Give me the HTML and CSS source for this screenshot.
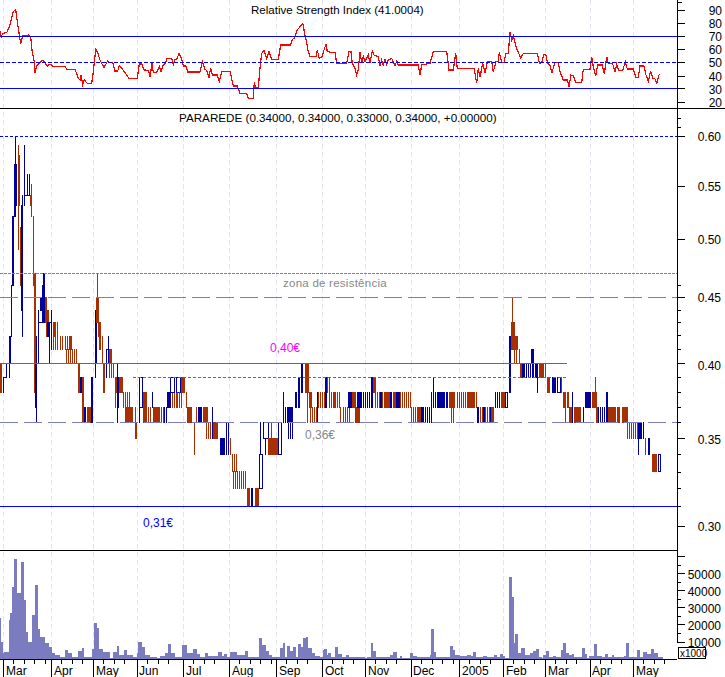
FILE: index.html
```html
<!DOCTYPE html>
<html lang="en">
<head>
    <meta charset="UTF-8">
    <title>PARAREDE</title>
    <link rel="stylesheet" href="styles.css">
</head>
<body>
    <svg id="chart" class="chart" width="725" height="677" viewBox="0 0 725 677">
        <g id="grid"></g>
        <g id="volume"></g>
        <g id="bars"></g>
        <g id="lines"></g>
        <g id="ticks"></g>

        <text class="label rsi-title" x="251" y="14">Relative Strength Index (41.0004)</text>
        <text class="label" x="179" y="122">PARAREDE (0.34000, 0.34000, 0.33000, 0.34000, +0.00000)</text>
        <text class="note note-grey wide" x="283" y="287">zona de resistência</text>
        <text class="note note-pink" x="270" y="352">0,40€</text>
        <text class="note note-grey" x="305" y="439">0,36€</text>
        <text class="note note-blue" x="143" y="527">0,31€</text>

        <g class="axis-right">
            <text x="722" y="15">90</text>
            <text x="722" y="28">80</text>
            <text x="722" y="41">70</text>
            <text x="722" y="54">60</text>
            <text x="722" y="67">50</text>
            <text x="722" y="81">40</text>
            <text x="722" y="94">30</text>
            <text x="722" y="107">20</text>
            <text x="721" y="141">0.60</text>
            <text x="721" y="191">0.55</text>
            <text x="721" y="244">0.50</text>
            <text x="721" y="302">0.45</text>
            <text x="721" y="370">0.40</text>
            <text x="721" y="444">0.35</text>
            <text x="721" y="531">0.30</text>
            <text x="721" y="579">50000</text>
            <text x="721" y="596">40000</text>
            <text x="721" y="613">30000</text>
            <text x="721" y="630">20000</text>
            <text x="721" y="647">10000</text>
        </g>

        <g class="axis-bottom">
            <text x="6" y="675">Mar</text>
            <text x="54" y="675">Apr</text>
            <text x="96" y="675">May</text>
            <text x="139" y="675">Jun</text>
            <text x="186" y="675">Jul</text>
            <text x="232" y="675">Aug</text>
            <text x="279" y="675">Sep</text>
            <text x="325" y="675">Oct</text>
            <text x="368" y="675">Nov</text>
            <text x="413" y="675">Dec</text>
            <text x="462" y="675">2005</text>
            <text x="506" y="675">Feb</text>
            <text x="548" y="675">Mar</text>
            <text x="592" y="675">Apr</text>
            <text x="636" y="675">May</text>
        </g>

        <rect class="unit-box" x="678.5" y="647.5" width="27" height="11"></rect>
        <text class="unit" x="680" y="657">x1000</text>
    </svg>

    <script src="chart.js"></script>
</body>
</html>
```

FILE: styles.css
```css
body {
    margin: 0;
    background: #fff;
}
.chart {
    display: block;
    shape-rendering: crispEdges;
    font-family: "Liberation Sans", Arial, sans-serif;
    font-size: 12px;
}
.label {
    font-size: 11.67px;
    fill: #000;
}
.rsi-title {
    font-size: 11.55px;
}
.note {
    font-size: 12px;
}
.note-grey {
    fill: #888;
}
.note-pink {
    fill: #f0f;
}
.note-blue {
    fill: #00f;
}
.wide {
    font-size: 11.5px;
    letter-spacing: 0.25px;
}
.axis-right text {
    text-anchor: end;
    fill: #000;
}
.axis-bottom text {
    fill: #000;
}
.unit-box {
    fill: #fff;
    stroke: #000;
}
.unit {
    font-size: 10px;
    fill: #000;
}
.black {
    stroke: #000;
}
.grid-line {
    stroke: #e3e3f4;
    stroke-dasharray: 5 3;
}
.level {
    stroke: #00f;
}
.dash-blue {
    stroke: #00f;
    stroke-dasharray: 4 2;
}
.dash-top {
    stroke: #00f;
    stroke-dasharray: 3 2;
}
.pink {
    stroke: #f0f;
}
.dash-pink {
    stroke: #f0f;
    stroke-dasharray: 3 2;
}
.dash-short {
    stroke: #7b7bc0;
    stroke-dasharray: 3 1;
}
.dash-long {
    stroke: #7b7bc0;
    stroke-dasharray: 18 6;
}
.rsi {
    fill: none;
    stroke: #f00;
    stroke-width: 1.2;
}
.vol {
    fill: #7b7bc0;
}
.up {
    fill: #00009c;
}
.down {
    fill: #a83000;
}
.hollow {
    fill: none;
    stroke: #00009c;
}
```

FILE: chart.js
```js
const NS = 'http://www.w3.org/2000/svg';

function add(group, tag, attrs) {
    const el = document.createElementNS(NS, tag);
    for (const k in attrs) el.setAttribute(k, attrs[k]);
    document.getElementById(group).appendChild(el);
}

function hline(group, cls, y, x1, x2) {
    add(group, 'line', { class: cls, x1: x1, x2: x2, y1: y + 0.5, y2: y + 0.5 });
}

function vline(group, cls, x, y1, y2) {
    add(group, 'line', { class: cls, x1: x + 0.5, x2: x + 0.5, y1: y1, y2: y2 });
}

// month starts
const months = [3, 51, 93, 137, 183, 229, 276, 322, 365, 411, 459, 503, 545, 590, 633, 677];

months.slice(0, -1).forEach(x => vline('grid', 'grid-line', x, 0, 659));

// price scale is logarithmic, prices are in cents
const py = c => Math.round(135.6 + 561 * Math.log(60 / c));

// x0, x1, high, low, kind: r/b solid, R/B striped, H hollow
const bars = [
    [0,1,40,38,'r'],[3,3,39,38,'b'],[3,6,39,39,'b'],[6,6,40,39,'b'],[9,9,42,39,'b'],[10,10,42,40,'b'],[11,11,46,42,'b'],
    [12,13,52,46,'b'],[14,14,53,52,'b'],[14,16,57,53,'H'],[15,15,60,52,'b'],[18,18,59,49,'r'],[18,19,58,53,'r'],
    [20,21,51,46,'r'],[21,22,53,44,'b'],[22,22,54,42,'b'],[24,24,59,53,'b'],[24,29,54,54,'b'],[27,27,56,54,'b'],[29,29,56,54,'b'],
    [30,31,54,53,'r'],[31,31,55,52,'r'],[33,33,52,47,'r'],[33,35,47,46,'r'],[34,35,46,38,'r'],[35,35,38,37,'r'],[36,36,42,36,'b'],[35,36,40,37,'b'],
    [38,38,44,40,'b'],[38,41,43,43,'b'],[40,41,45,44,'b'],[42,42,46,43,'b'],[43,44,47,43,'b'],[45,46,45,43,'r'],[46,46,43,42,'r'],
    [47,48,44,43,'r'],[47,49,43,42,'b'],[49,49,43,40,'b'],[49,51,43,43,'b'],[51,51,44,41,'b'],
    [53,58,43,41,'R'],[53,54,43,42,'r'],[60,63,42,41,'R'],[65,69,42,41,'R'],[70,71,42,41,'r'],[66,77,41,40,'R'],
    [78,79,40,38,'r'],[80,81,39,38,'b'],[82,83,39,36,'r'],[84,85,37,36,'b'],[87,89,37,36,'r'],[90,90,37,36,'r'],[91,92,39,36,'b'],
    [95,96,44,40,'b'],[95,95,40,39,'b'],[96,98,45,43,'r'],[97,97,47,45,'r'],[98,98,43,42,'r'],[99,100,43,41,'r'],[102,102,42,40,'r'],
    [103,104,40,38,'r'],[106,106,41,39,'b'],[106,108,41,41,'b'],[108,108,42,40,'b'],[109,111,41,40,'r'],[109,114,40,39,'R'],
    [115,116,39,38,'r'],[115,115,38,37,'r'],[117,117,40,36,'b'],[118,118,39,37,'b'],[119,122,39,38,'r'],
    [123,129,38,37,'R'],[125,132,37,36,'r'],[135,136,36,35,'r'],[135,135,37,36,'r'],
    [139,139,39,36,'b'],[139,142,39,37,'H'],[143,146,38,36,'r'],[148,150,37,36,'R'],[152,152,38,37,'b'],[153,158,37,36,'r'],
    [159,163,37,36,'R'],[164,166,37,36,'B'],[167,169,38,37,'b'],[170,170,39,37,'b'],[172,176,38,37,'R'],[170,174,39,38,'H'],[176,180,39,38,'H'],
    [181,184,39,38,'r'],[177,182,38,37,'R'],[186,186,38,37,'r'],[187,191,37,36,'r'],[194,194,36,34,'r'],[196,196,37,36,'r'],
    [198,201,37,36,'b'],[203,207,37,36,'r'],[206,210,36,35,'R'],[212,212,37,35,'b'],[213,217,36,35,'r'],
    [220,224,35,34,'b'],[226,226,36,34,'b'],[228,228,36,34,'b'],[230,230,35,34,'r'],[232,237,34,33,'R'],[233,246,33,32,'R'],
    [247,249,32,31,'r'],[251,252,32,31,'b'],[255,258,32,31,'r'],[259,262,34,32,'H'],[260,260,36,34,'b'],[265,265,35,34,'b'],
    [263,268,36,35,'H'],[271,271,36,35,'r'],[268,277,35,34,'r'],[278,281,36,34,'H'],[283,283,38,36,'b'],[285,285,37,36,'b'],
    [287,292,37,36,'b'],[288,292,36,35,'B'],[295,296,38,37,'b'],[298,299,39,37,'b'],[301,302,40,38,'b'],[305,308,40,38,'r'],
    [307,307,38,36,'r'],[309,311,38,37,'r'],[310,316,37,36,'R'],[317,317,38,36,'b'],[318,323,38,37,'R'],[324,324,38,37,'r'],
    [325,326,39,37,'b'],[327,329,39,38,'R'],[329,334,38,37,'R'],[333,335,38,37,'r'],[337,340,38,37,'R'],[340,341,37,36,'R'],
    [343,350,37,36,'R'],[348,351,38,37,'b'],[352,355,38,37,'r'],[355,359,37,36,'r'],[357,361,38,37,'b'],[363,367,38,37,'B'],
    [369,370,38,37,'B'],[371,373,39,38,'b'],[371,372,38,37,'b'],[373,375,39,38,'r'],[375,380,38,37,'R'],[380,381,38,37,'b'],
    [382,384,38,37,'R'],[385,389,38,37,'r'],[390,391,38,37,'b'],[393,396,38,37,'r'],[396,399,38,37,'b'],[400,410,38,37,'R'],
    [411,419,37,36,'R'],[418,420,37,36,'r'],[421,423,37,36,'b'],[425,432,37,36,'B'],[433,433,39,38,'b'],[431,437,38,37,'B'],
    [438,444,38,37,'b'],[446,447,38,37,'b'],[449,454,38,37,'r'],[451,453,37,36,'R'],[457,466,38,37,'R'],[467,473,38,37,'r'],
    [474,476,38,37,'R'],[477,478,37,36,'b'],[480,482,37,36,'R'],[483,484,37,36,'b'],[485,489,37,36,'R'],[490,491,37,36,'b'],
    [491,493,37,36,'r'],[495,499,38,37,'B'],[501,505,38,37,'r'],[505,507,38,37,'H'],[509,510,42,38,'b'],[509,512,42,42,'b'],
    [511,514,43,41,'r'],[512,512,45,43,'r'],[515,517,42,41,'r'],[514,514,41,40,'r'],[516,516,41,40,'r'],[519,519,41,40,'r'],
    [520,521,40,39,'r'],[522,523,40,39,'b'],[524,530,40,39,'B'],[531,533,41,40,'b'],[532,533,40,39,'b'],[535,537,40,39,'b'],
    [537,537,39,38,'b'],[539,543,40,39,'r'],[545,546,40,39,'R'],[547,549,39,38,'r'],[552,555,39,38,'b'],[557,560,39,38,'H'],
    [561,562,39,38,'R'],[563,565,38,37,'r'],[565,565,37,36,'r'],[567,568,38,37,'r'],[569,571,37,36,'r'],[572,572,38,36,'b'],
    [574,580,37,36,'r'],[583,583,37,36,'b'],[585,590,38,37,'b'],[592,596,38,37,'r'],[595,595,39,38,'r'],[596,597,37,36,'r'],
    [598,604,37,36,'B'],[606,607,38,36,'b'],[608,614,37,36,'r'],[615,617,37,36,'R'],[618,619,37,36,'r'],[622,627,37,36,'r'],
    [627,634,36,35,'R'],[635,637,36,35,'R'],[638,641,36,35,'b'],[638,638,35,34,'b'],[643,643,36,35,'b'],[645,646,35,34,'R'],
    [648,649,35,34,'b'],[652,656,34,33,'r'],[658,660,34,33,'H']
];

bars.forEach(([x0, x1, hi, lo, kind]) => {
    const top = py(hi), h = py(lo) - top + 1;
    if (kind === 'H') {
        add('bars', 'rect', { class: 'hollow', x: x0 + 0.5, y: top + 0.5, width: x1 - x0, height: h - 1 });
    } else if (kind === 'r' || kind === 'b') {
        add('bars', 'rect', { class: kind === 'r' ? 'down' : 'up', x: x0, y: top, width: x1 - x0 + 1, height: h });
    } else {
        for (let x = x0; x <= x1; x += 2) {
            add('bars', 'rect', { class: kind === 'R' ? 'down' : 'up', x: x, y: top, width: 1, height: h });
        }
    }
});

// volume: zoomed x range end and top, read off at 3x
const volume = [
    [0,3,218],[3,8,290],[8,12,325],[12,27,322],[27,30,225],[30,36,205],[36,43,125],[43,50,42],[50,64,145],[64,72,52],[72,78,165],[78,85,260],[85,97,292],
    [97,104,210],[104,113,120],[113,120,252],[120,135,275],[135,148,295],[148,155,305],[155,165,325],[165,180,330],[180,195,335],[195,205,316],[205,215,325],
    [215,235,335],[235,245,318],[245,252,310],[252,275,335],[275,282,312],[282,292,235],[292,298,248],[298,308,312],[308,330,321],[330,340,340],[340,350,322],
    [350,358,303],[358,372,330],[372,380,316],[380,400,330],[400,412,335],[412,415,325],[415,425,292],[425,435,306],[435,450,330],[450,470,335],[470,480,338],
    [480,495,333],[495,505,325],[505,512,298],[512,525,325],[525,545,335],[545,562,299],[562,578,325],[578,590,312],[590,600,328],[600,615,335],[615,625,325],
    [625,655,333],[655,665,322],[665,672,333],[672,680,328],[680,690,335],[690,710,322],[710,720,330],
    [720,735,330],[735,743,318],[743,777,335],[777,785,280],[785,797,300],[797,807,318],[807,817,330],[817,840,337],[840,848,310],[848,855,295],[855,860,335],
    [860,870,303],[870,878,318],[878,888,306],[888,893,335],[893,903,298],[903,910,305],[910,917,280],[917,924,276],[924,935,310],[935,945,323],[945,960,333],
    [960,968,337],[968,972,316],[972,980,312],[980,985,330],[985,992,323],[992,1005,337],[1005,1014,306],[1014,1025,327],[1025,1038,337],[1038,1048,330],
    [1048,1095,336],[1095,1100,340],[1100,1112,336],[1112,1120,295],[1120,1127,318],[1127,1157,335],[1157,1170,337],[1170,1178,330],[1178,1190,322],[1190,1200,338],
    [1200,1207,333],[1207,1230,338],[1230,1238,323],[1238,1250,333],[1250,1290,337],[1290,1293,330],[1293,1301,253],[1301,1308,322],[1308,1350,336],[1350,1358,303],
    [1358,1365,316],[1365,1380,330],[1380,1400,333],[1400,1413,330],[1413,1420,333],[1420,1428,322],[1428,1440,335],
    [1440,1450,337],[1450,1462,334],[1462,1482,337],[1482,1490,330],[1490,1500,337],[1500,1510,328],[1510,1515,332],[1515,1527,340],[1527,1535,97],[1535,1541,157],
    [1541,1545,295],[1545,1553,268],[1553,1562,325],[1562,1575,310],[1575,1590,330],[1590,1600,323],[1600,1608,318],[1608,1616,313],[1616,1625,335],[1625,1630,340],
    [1630,1637,330],[1637,1647,318],[1647,1658,337],[1658,1668,334],[1668,1682,337],[1682,1688,315],[1688,1698,295],[1698,1708,325],[1708,1715,330],[1715,1722,327],
    [1722,1745,337],[1745,1754,310],[1754,1762,328],[1762,1768,340],[1768,1782,333],[1782,1790,298],[1790,1805,332],[1805,1815,336],[1815,1824,327],[1824,1835,337],
    [1835,1843,330],[1843,1872,336],[1872,1878,333],[1878,1886,295],[1886,1910,337],[1910,1920,315],[1920,1930,336],[1930,1940,322],[1940,1952,328],[1952,1962,312],
    [1962,1975,325],[1975,1988,336]
];

volume.forEach(([a, b, top]) => {
    const y = Math.round(545 + top / 3);
    add('volume', 'rect', { class: 'vol', x: Math.round(a / 3), y: y, width: Math.round(b / 3) - Math.round(a / 3), height: 659 - y });
});

// rsi line, also read off at 3x
const rsi = [
    0,93,4,110,8,100,20,98,30,75,40,35,47,28,52,65,58,105,62,132,68,108,85,105,92,112,97,158,103,185,105,220,110,197,125,183,130,182,142,198,150,192,158,199,195,199,
    200,208,225,208,235,235,240,240,243,225,248,253,253,240,262,250,275,250,280,215,287,148,292,155,300,180,312,203,323,182,328,188,338,188,345,213,353,213,358,198,
    365,205,380,225,387,235,412,235,418,192,425,192,432,210,445,211,450,230,456,190,460,217,470,217,478,200,483,215,490,195,497,190,500,175,515,175,520,195,525,178,
    530,178,537,160,545,178,550,198,558,198,563,216,600,216,607,185,615,208,620,212,627,232,632,205,637,225,652,225,658,245,665,214,690,214,700,258,712,258,720,280,
    740,280,745,295,760,295,763,245,767,265,775,262,780,205,785,160,792,152,800,175,807,155,815,178,835,178,842,135,872,135,877,118,883,115,892,90,900,80,908,70,
    915,105,920,130,925,155,930,170,948,170,952,150,958,175,967,170,972,150,978,132,982,155,1005,158,1010,190,1040,190,1047,155,1053,155,1057,190,1065,205,1070,225,
    1075,210,1080,155,1085,190,1090,170,1095,185,1105,165,1110,190,1117,152,1122,165,1135,170,1140,198,1145,180,1150,195,1155,178,1160,195,1165,180,1175,175,1185,198,
    1190,183,1195,195,1255,195,1260,225,1265,195,1290,190,1300,155,1340,155,1347,210,1360,210,1367,160,1372,205,1422,205,1430,250,1435,205,1440,232,
    1448,190,1455,220,1462,185,1475,185,1480,215,1488,185,1495,183,1498,157,1505,187,1512,187,1518,160,1525,160,1530,95,1535,120,1540,108,1548,140,1562,175,1570,160,
    1612,160,1618,190,1625,188,1632,163,1637,163,1643,190,1650,195,1655,220,1665,188,1675,188,1680,215,1690,240,1702,240,1707,260,1713,225,1720,228,1727,247,1745,247,
    1750,208,1770,208,1775,170,1780,200,1787,228,1793,195,1807,195,1813,222,1820,170,1825,190,1838,192,1845,215,1850,192,1856,211,1868,211,1876,185,1882,207,1900,207,
    1908,232,1915,232,1920,198,1932,198,1938,225,1945,243,1952,213,1958,235,1964,235,1970,250,1977,225,1981,223
];
const pts = [];
for (let i = 0; i < rsi.length; i += 2) pts.push((rsi[i] / 3).toFixed(1) + ',' + (rsi[i + 1] / 3).toFixed(1));
add('lines', 'polyline', { class: 'rsi', points: pts.join(' ') });

// levels
hline('lines', 'level', 36, 0, 677);
hline('lines', 'dash-blue', 62, 0, 677);
hline('lines', 'level', 88, 0, 677);
hline('lines', 'dash-top', 136, 0, 677);
hline('lines', 'dash-short', 273, 0, 677);
hline('lines', 'dash-long', 297, 0, 677);
hline('lines', 'pink', 363, 0, 567);
hline('lines', 'dash-pink', 377, 133, 567);
hline('lines', 'dash-long', 422, 0, 677);
hline('lines', 'level', 506, 0, 677);

// frame
hline('ticks', 'black', 108, 0, 725);
hline('ticks', 'black', 550, 0, 677);
hline('ticks', 'black', 659, 0, 677);
vline('ticks', 'black', 677, 0, 642);

// right axis ticks: [y, length]
[[2,4],[10,7],[23,7],[36,7],[49,7],[62,7],[76,7],[88,7],[102,7],
 [118,3],[127,3],[136,7],[186,7],[239,7],[285,3],[297,7],[310,3],[322,3],[335,3],[349,3],[363,7],[377,3],[392,3],[407,3],[422,3],[438,7],[454,3],[472,3],[488,3],[506,3],[526,7],
 [556,7],[565,3],[573,7],[582,3],[590,7],[599,3],[607,7],[616,3],[624,7],[633,3],[642,7]
].forEach(([y, len]) => hline('ticks', 'black', y, 677, 678 + len));

// bottom axis ticks
months.forEach((x, i) => {
    if (i === months.length - 1) return;
    vline('ticks', 'black', x, 659, 677);
    for (let t = x + 10.4; t < months[i + 1] - 5; t += 10.4) {
        vline('ticks', 'black', Math.round(t), 659, 664);
    }
});
```
